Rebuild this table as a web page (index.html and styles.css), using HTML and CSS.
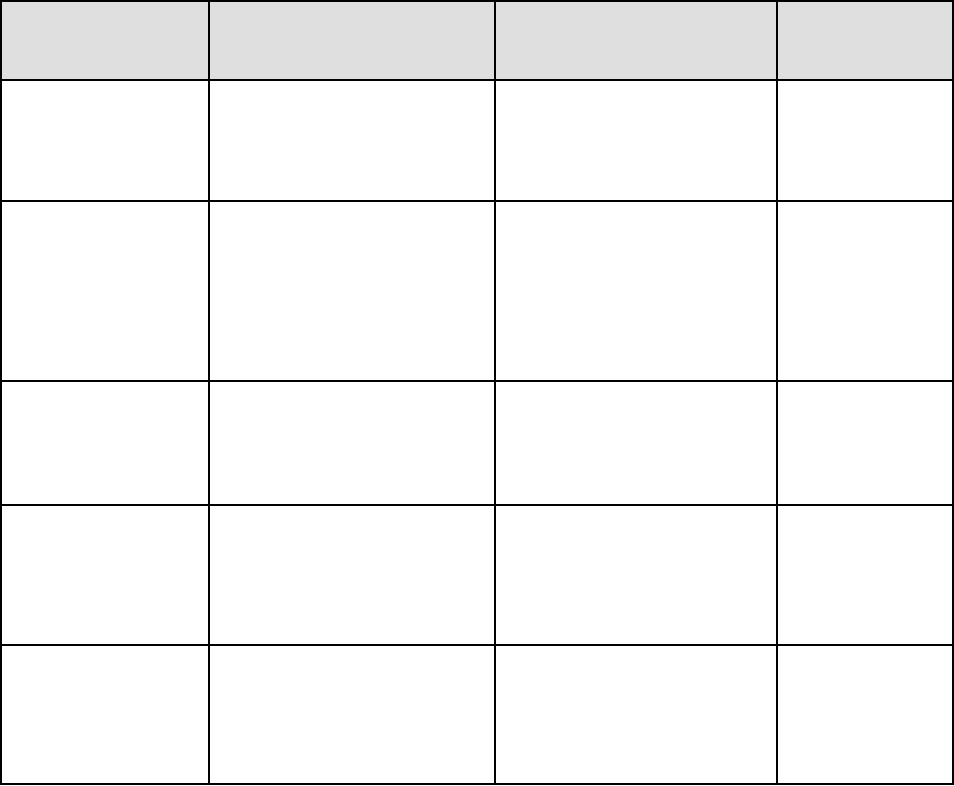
FILE: index.html
```html
<!DOCTYPE html>
<html lang="en">
<head>
<meta charset="utf-8">
<title>Table</title>
<link rel="stylesheet" href="styles.css">
</head>
<body>
<table class="grid">
  <colgroup>
    <col class="c1">
    <col class="c2">
    <col class="c3">
    <col class="c4">
  </colgroup>
  <thead>
    <tr class="r-head"><th></th><th></th><th></th><th></th></tr>
  </thead>
  <tbody>
    <tr class="r1"><td></td><td></td><td></td><td></td></tr>
    <tr class="r2"><td></td><td></td><td></td><td></td></tr>
    <tr class="r3"><td></td><td></td><td></td><td></td></tr>
    <tr class="r4"><td></td><td></td><td></td><td></td></tr>
    <tr class="r5"><td></td><td></td><td></td><td></td></tr>
  </tbody>
</table>
</body>
</html>
```
FILE: styles.css
```css
html, body {
  margin: 0;
  padding: 0;
  background: #ffffff;
  font-family: "Liberation Sans", Arial, sans-serif;
}
.grid {
  border-collapse: separate;
  border-spacing: 2px;
  table-layout: fixed;
  width: 954px;
  background: #000000;
}
.grid th, .grid td {
  border: 0;
  padding: 0;
  background: #ffffff;
}
.grid th {
  background: #dfdfdf;
}
.c1 { width: 206px; }
.c2 { width: 284px; }
.c3 { width: 280px; }
.c4 { width: 174px; }
.r-head { height: 77px; }
.r1 { height: 119px; }
.r2 { height: 178px; }
.r3 { height: 122px; }
.r4 { height: 138px; }
.r5 { height: 137px; }
```
